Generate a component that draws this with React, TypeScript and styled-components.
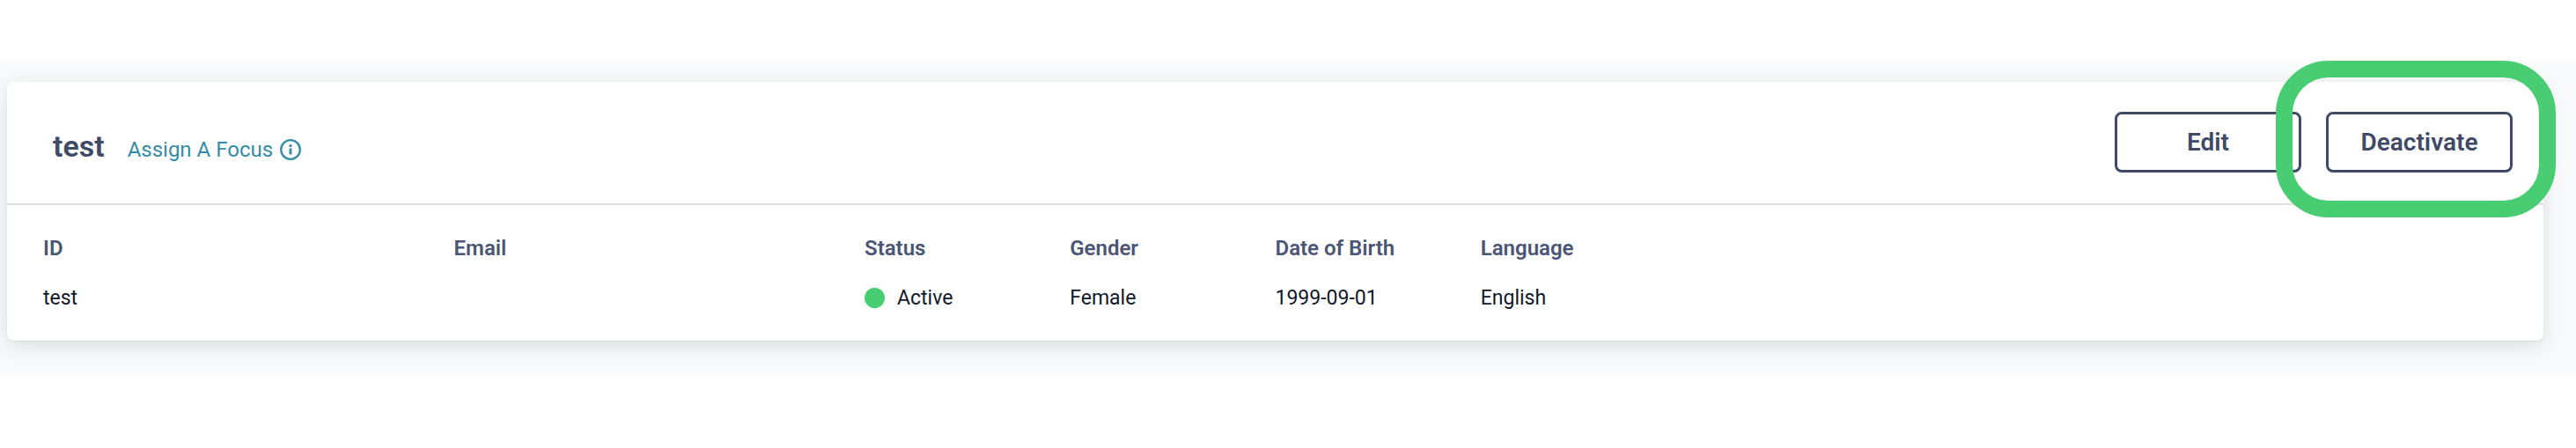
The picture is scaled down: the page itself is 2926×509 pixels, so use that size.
import React from 'react';
import styled, { createGlobalStyle } from 'styled-components';

const GlobalStyle = createGlobalStyle`
  * { box-sizing: border-box; }
  body {
    margin: 0;
    background: #ffffff;
    font-family: Roboto, 'Liberation Sans', sans-serif;
  }
`;

const Page = styled.main`
  padding: 69px 0 84px;
`;

const Band = styled.section`
  padding: 24px 37px 38px 8px;
  background: #f9fafc;
  overflow: hidden;
`;

const Card = styled.article`
  background: #ffffff;
  border-radius: 8px;
  box-shadow: 0 6px 24px rgba(0, 0, 0, 0.12), 0 1px 2px rgba(0, 0, 0, 0.06);
`;

const CardHeader = styled.header`
  display: flex;
  justify-content: space-between;
  align-items: flex-start;
  padding: 34px 35px 35px 52px;
  border-bottom: 2px solid #e0e0e0;
`;

const Heading = styled.div`
  display: flex;
  align-items: baseline;
  gap: 26px;
  padding-top: 17px;
`;

const Title = styled.h1`
  margin: 0;
  font-size: 34px;
  line-height: 44px;
  font-weight: 600;
  color: #3f4a67;
`;

const FocusLink = styled.a`
  display: flex;
  align-items: center;
  gap: 7px;
  font-size: 24px;
  line-height: 32px;
  color: #348ca5;
  text-decoration: none;
`;

const Actions = styled.div`
  display: flex;
  gap: 28px;
`;

const ActionButton = styled.button`
  width: 212px;
  height: 69px;
  padding: 0;
  border: 3px solid #3f4a67;
  border-radius: 8px;
  background: #ffffff;
  font: 600 28px Roboto, 'Liberation Sans', sans-serif;
  color: #3f4a67;
  cursor: pointer;
`;

const Highlighted = styled.div`
  position: relative;
`;

const HighlightRing = styled.span`
  position: absolute;
  inset: -58px -49px -51px -57px;
  border: 19px solid #49cd73;
  border-radius: 60px;
  pointer-events: none;
`;

const TableArea = styled.div`
  padding: 20px 41px;
`;

const Table = styled.table`
  width: 100%;
  table-layout: fixed;
  border-collapse: collapse;
  text-align: left;
`;

const Column = styled.col<{ $span: number }>`
  width: calc(100% * ${({ $span }) => $span} / 12);
`;

const HeadCell = styled.th`
  height: 57px;
  padding: 0;
  font-size: 24px;
  font-weight: 600;
  color: #4b5674;
`;

const Cell = styled.td`
  height: 57px;
  padding: 0;
  font-size: 23px;
  color: #12182b;
`;

const Status = styled.span`
  display: flex;
  align-items: center;
  gap: 14px;
`;

const StatusDot = styled.span`
  width: 23px;
  height: 23px;
  border-radius: 50%;
  background: #49cd73;
`;

const InfoIcon = () => (
  <svg width="26" height="26" viewBox="0 0 26 26" fill="none" aria-hidden="true">
    <circle cx="13" cy="13" r="10.8" stroke="currentColor" strokeWidth="2.3" />
    <rect x="11.5" y="7.2" width="3" height="2.7" rx="0.6" fill="currentColor" />
    <rect x="11.5" y="11.5" width="3" height="7" rx="0.6" fill="currentColor" />
  </svg>
);

const columns = [
  { label: 'ID', span: 2 },
  { label: 'Email', span: 2 },
  { label: 'Status', span: 1 },
  { label: 'Gender', span: 1 },
  { label: 'Date of Birth', span: 1 },
  { label: 'Language', span: 1 },
];

export default function App() {
  return (
    <>
      <GlobalStyle />
      <Page>
        <Band>
          <Card>
            <CardHeader>
              <Heading>
                <Title>test</Title>
                <FocusLink href="#focus">
                  Assign A Focus
                  <InfoIcon />
                </FocusLink>
              </Heading>
              <Actions>
                <ActionButton type="button">Edit</ActionButton>
                <Highlighted>
                  <ActionButton type="button">Deactivate</ActionButton>
                  <HighlightRing />
                </Highlighted>
              </Actions>
            </CardHeader>
            <TableArea>
              <Table>
                <colgroup>
                  {columns.map((c) => (
                    <Column key={c.label} $span={c.span} />
                  ))}
                  <Column $span={4} />
                </colgroup>
                <thead>
                  <tr>
                    {columns.map((c) => (
                      <HeadCell key={c.label} scope="col">{c.label}</HeadCell>
                    ))}
                    <Cell />
                  </tr>
                </thead>
                <tbody>
                  <tr>
                    <Cell>test</Cell>
                    <Cell />
                    <Cell>
                      <Status>
                        <StatusDot />
                        Active
                      </Status>
                    </Cell>
                    <Cell>Female</Cell>
                    <Cell>1999-09-01</Cell>
                    <Cell>English</Cell>
                    <Cell />
                  </tr>
                </tbody>
              </Table>
            </TableArea>
          </Card>
        </Band>
      </Page>
    </>
  );
}
